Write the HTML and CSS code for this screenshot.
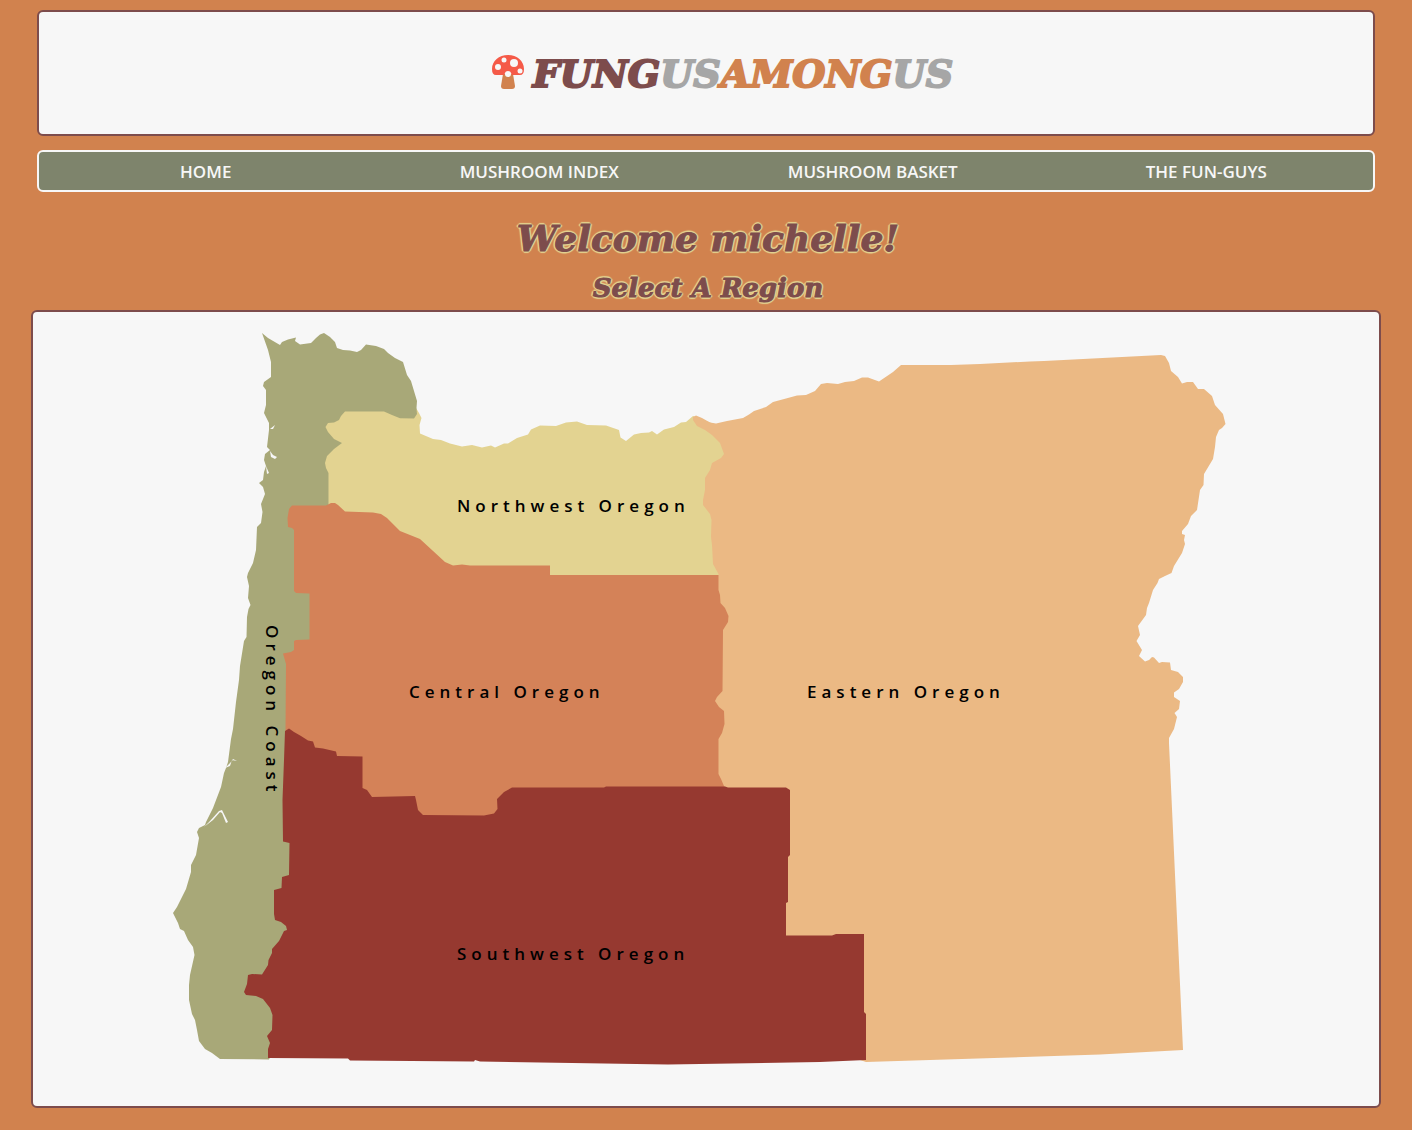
FILE: index.html
```html
<!DOCTYPE html>
<html lang="en">
<head>
<meta charset="utf-8">
<meta name="viewport" content="width=device-width, initial-scale=1">
<title>Fungus Among Us</title>
<link rel="stylesheet" href="styles.css">
</head>
<body>
<header class="banner">
  <a class="logo" href="#">
    <svg class="logo-icon" viewBox="0 0 34 36" aria-hidden="true">
      <path fill="#d1824e" d="M12 20h10l2 12q0 3-3 3h-8q-3 0-3-3z"/>
      <path fill="#f55a48" d="M5 21Q1 21 1 15C1 7 8 1 17 1s16 6 16 14q0 6-4 6h-8q-1-3-4-3t-4 3z"/>
      <circle cx="17" cy="20" r="3" fill="#f7f7f7"/>
      <circle cx="23" cy="9" r="4" fill="#f7f7f7"/>
      <circle cx="13" cy="6" r="2.5" fill="#f7f7f7"/>
      <circle cx="7" cy="13" r="3" fill="#f7f7f7"/>
      <circle cx="29" cy="17" r="2.5" fill="#f7f7f7"/>
    </svg>
    <span class="logo-text"><span class="plum">FUNG</span><span class="gray">US</span><span class="orange">AMONG</span><span class="gray">US</span></span>
  </a>
</header>
<nav class="menu">
  <a href="#">HOME</a>
  <a href="#">MUSHROOM INDEX</a>
  <a href="#">MUSHROOM BASKET</a>
  <a href="#">THE FUN-GUYS</a>
</nav>
<main>
  <h1 class="welcome">Welcome michelle!</h1>
  <h2 class="prompt">Select A Region</h2>
  <section class="map-card">
    <svg class="map" viewBox="33 312 1346 794" role="group" aria-label="Regions of Oregon">
      <a href="#coast">
        <path class="coast" d="M262 333L268 338 280 345 282 342 288 339.500 296 337.500 295 341 300 344.500 311 343 316 338 320 334.500 324 333 330 337 335 342 337 348 343 350 350 350.500 357 352 361 350 366 344.500 376 346 384 349 388 353 395 358 403 362 407 375 411 381 414 391 417 401 416.500 408 418 414 414 422 350 500 320 650 300 800 300 1000 269 1059.500 220 1059 212 1053 205 1049 199 1041 197 1030 195 1020 192 1014 189 1000 189 985 190 975 194.500 955 193 947 188 940 184 931 180 929 178 923 173 913 177 907 186 889 191 872 191 865 196 855 199 838 197 832 199 828 205 825 206 822 213 808 221 787 224 773 226 768 228 762 231 739 233 729 236 702 239 680 240 666 244 641 246.500 637 247 617 248.500 609 250.500 605 248 598 249 586 247 577 248 573 253 563 256 550 257 527 261 523 262.500 512 261 504 265 494 263 487 259 483 263 480 264 472 266 466 264 460 265 454 270 450 267 447 269 430 269 423 264 413 266 405 266 390 263 386 264 382 271 377 271 362 268 350Z"/>
        <path class="water" d="M270 429L275 425 273 429ZM270 451L273 455 277 457 275 459 271 457ZM266 466L269 473 267 474ZM225 768L230 766 232 760 237 761 233 759 231 762ZM204 827L213 820 220 812 222 813 226 823 228 822 222 810 219 811 210 821Z"/>
      </a>
      <a href="#northwest"><path class="northwest" d="M384 411.500L345 411.500 341 416 339 420 334 422.500 328 423 325.500 427 328 432 334 439 342 443 334 449 327 456 325 463 326 468 328.500 473 328.500 520 450 580 740 580 735 500 730 430 693 416 686 422 681 422.500 674 427 664 429.500 657 434.500 652 431 649 432.500 641 433 634 434.500 626 441 620.500 437.500 619 430 606 425.500 587 425 577 421.500 566 422.500 556 426 540 425.500 531 429.500 528 434.500 517 438 508 443.500 504 443.500 495 447.500 491 445.500 482 447.500 472 445 462 446.500 450 443.500 441 440 433 439 420 433.500 419.500 425 421.500 418 419 413 416.500 409 417 414 414 418.500 400 418.300 392 415Z"/></a>
      <a href="#central"><path class="central" d="M292 505.500L326 505.500 331 503 335 503 338 505 345 511.500 373 512.500 381 514 387 518 400 531 420 539 445 562 453 565.500 462 564.500 470 565.500 550 565.500 550 575 730 575 730 800 500 830 400 830 300 770 285.500 731 286 664 284 657 283 653.500 291 652 294 650 294 641 296 640 309.500 639.500 309.500 593.500 296 593 294 591 294 530 292 528 288 527 287.500 518 289 509Z"/></a>
      <a href="#eastern"><path class="eastern" d="M693 417L696 415.500 702 418 710 422.500 716 423.500 727 421 743 418 749 414.500 754 411 766 407 773 402 786 398.500 797 395.500 806 395 815 391 821 384 827 383 838 384 845 382 854 381 862 377.500 868 377.500 879 381.500 893 372 901 365 951 365 980 364 1030 361.500 1044 361 1161 355 1165 356 1169 363 1171 371 1178 377 1182 383.500 1187 382 1193 382 1198 389 1204 389 1212 396 1215 405 1223 414 1225.500 424 1222 428 1219 430 1216 437 1215 447 1213 459 1204 474 1203.500 485 1200 490 1197 510 1191 516 1188 524 1182 531 1182 534 1185 535 1184 540 1185 544 1182 553 1174 566 1171.500 573 1165 576 1159 579 1157.500 583 1153 590 1149 603 1147 608 1146 615 1138 626 1140 635 1136.500 641 1142 650 1139 656 1145 661.500 1149 660 1152 657 1154 657.500 1159 663 1162 662 1170 662.500 1171 670 1178 672 1183 677 1183 682 1179 689 1174 692.500 1174 697 1180 701 1179 709 1174.500 713 1177 717 1174 729 1169 738 1169 743 1183 1050 1100 1054.500 866 1062 860 1060 780 940 728 790 724 786 721 779 718.500 774 718.500 739 722 733 724.500 724 724 711 719 707 715 701 717 697 722.500 691 723 630 728 622 728.500 616 725 608 720.500 603 720 595 718.500 590 718.500 574 713 564 712 545 711 537 711.500 520 710 514 703 505 703 500 705 490 705 478 710 470 712 463 721 458 724 454 720 443 712 435 705 430 697 426 693 420Z"/></a>
      <a href="#southwest"><path class="southwest" d="M285 731L289 728.500 294 732 301 736 308 740.500 313 741.500 315 747.500 323 748.500 336 751.500 337 756 362.500 756.500 362.500 788 367 790 372 797 415 796 416 800 418 810 423 815 484 815.500 494 813.500 497.500 809 497 799 504 792 512 787.500 604 787.500 606 786.500 725 786.500 728 787.500 786 787.500 790 790 790 855 788 857 788 902 786 903 786 935.500 832 935.500 836 934 864 934 864 1012 866 1014 866 1060 820 1062 700 1064 668 1064.500 480 1061.500 475 1060 474 1061.500 350 1060.500 348 1058.500 268 1058 268 1049 270 1043 267 1036 272 1030 272.500 1015 270 1008 263 999 256 996 246 995 244 992 247 984 248 975 252 974 262 974.500 268 965 268.500 960 272 953 272 949 279 941 284 931 287 930 286 926 281 922 275 920 274 914 274 890 281.500 888 282 877 289 875 289.500 843 283 841.500 282.500 800 284 760Z"/></a>
      <g class="labels">
        <text x="457" y="512">Northwest Oregon</text>
        <text x="409" y="698">Central Oregon</text>
        <text x="807" y="698">Eastern Oregon</text>
        <text x="457" y="960">Southwest Oregon</text>
        <text transform="translate(266 625) rotate(90)">Oregon Coast</text>
      </g>
    </svg>
  </section>
</main>
</body>
</html>
```
FILE: styles.css
```css
* { box-sizing: border-box; }

body {
  margin: 0;
  padding: 10px 31px 23px;
  background: #d1824e;
  font-family: "Open Sans", "Noto Sans", sans-serif;
}

a { color: inherit; text-decoration: none; }

.banner {
  display: flex;
  align-items: center;
  justify-content: center;
  height: 126px;
  margin: 0 6px 14px;
  padding-bottom: 2px;
  background: #f7f7f7;
  border: 2px solid #7d4c4c;
  border-radius: 6px;
}

.logo {
  display: flex;
  align-items: center;
  gap: 8px;
  padding-left: 32px;
}

.logo-icon { width: 34px; height: 36px; }

.logo-text {
  padding-top: 4px;
  font: italic bold 38px/48px "DejaVu Serif", serif;
  -webkit-text-stroke: 2px;
}

.plum { color: #7d4c4c; }
.gray { color: #a6a6a6; }
.orange { color: #d1824e; }

.menu {
  display: grid;
  grid-template-columns: repeat(4, 1fr);
  align-items: center;
  height: 42px;
  margin: 0 6px;
  padding-top: 2px;
  background: #7e846c;
  border: 2px solid #f7f7f7;
  border-radius: 6px;
  color: #f7f7f7;
  font-size: 17px;
  font-weight: 600;
  line-height: 24px;
  text-align: center;
}

.welcome,
.prompt {
  margin: 0;
  padding-left: 4px;
  color: #7d4c4c;
  font-family: "DejaVu Serif", serif;
  font-style: italic;
  font-weight: bold;
  text-align: center;
  -webkit-text-stroke: 1px;
  text-shadow: 1px 1px 1px #e3d391, -1px -1px 1px #e3d391, 1px -1px 1px #e3d391, -1px 1px 1px #e3d391,
    2px 0 1px #e3d391, -2px 0 1px #e3d391, 0 2px 1px #e3d391, 0 -2px 1px #e3d391;
}

.welcome {
  padding-top: 20px;
  font-size: 36px;
  line-height: 52px;
}

.prompt {
  padding-top: 2px;
  font-size: 26px;
  line-height: 44px;
}

.map-card {
  background: #f7f7f7;
  border: 2px solid #7d4c4c;
  border-radius: 6px;
}

.map { display: block; width: 100%; height: auto; }

.coast { fill: #a8a878; }
.northwest { fill: #e3d391; }
.central { fill: #d48258; }
.eastern { fill: #ebb984; }
.southwest { fill: #963930; }
.water { fill: #f7f7f7; }

.labels {
  fill: #000;
  font-size: 17px;
  font-weight: 600;
  letter-spacing: 5px;
  pointer-events: none;
}
```
